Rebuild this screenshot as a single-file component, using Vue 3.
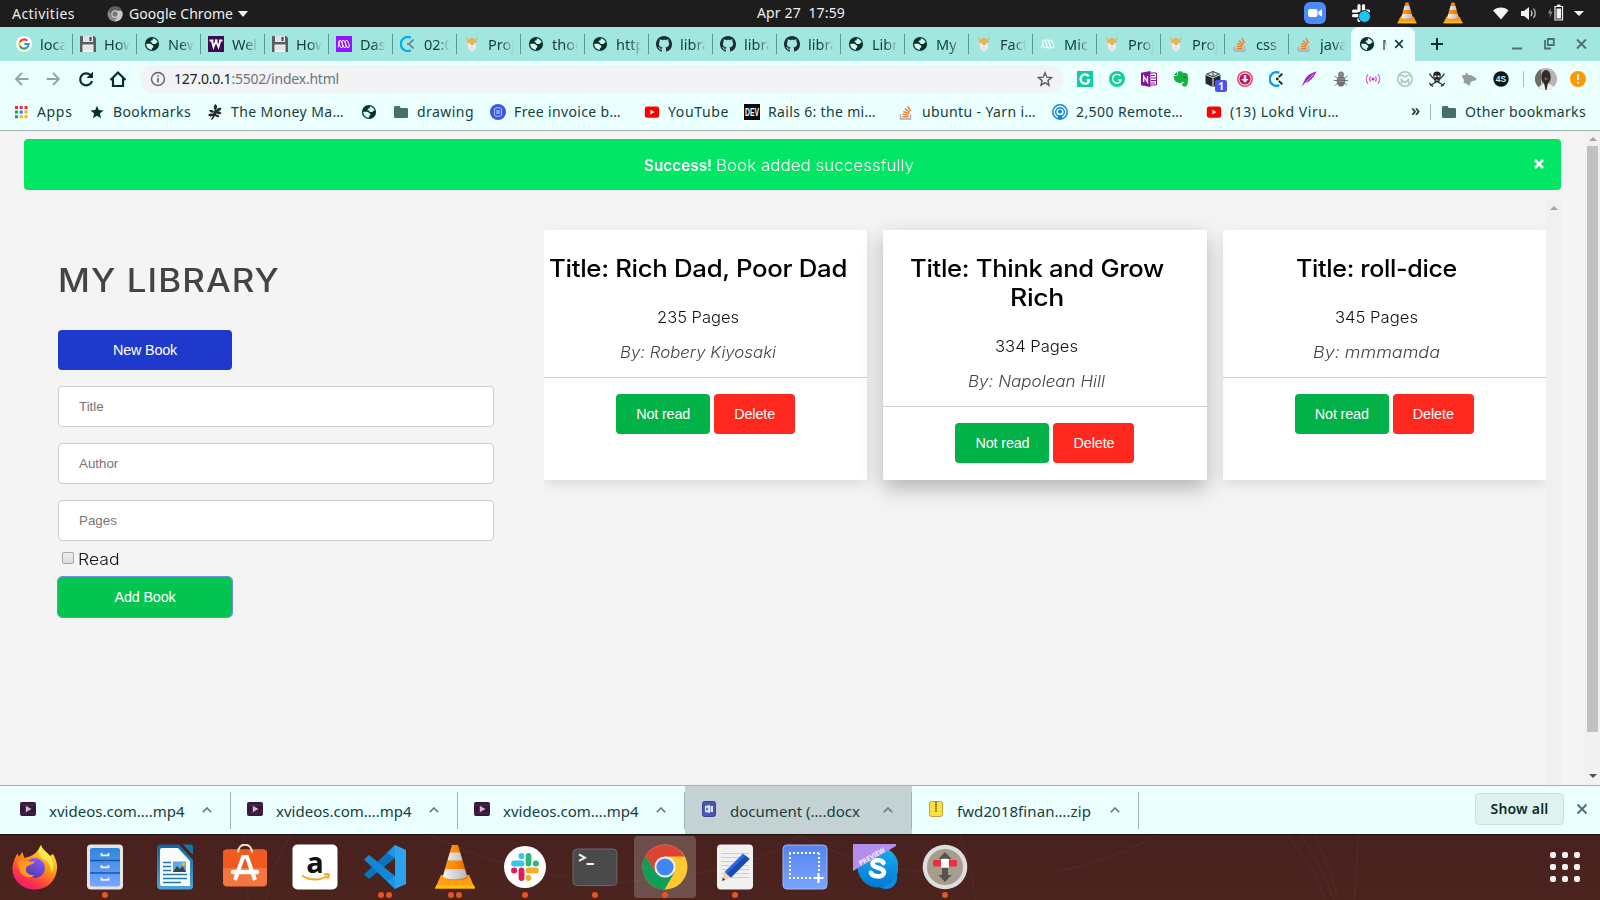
<script setup>
// Spreads the glyphs of a label so that it fills the given width in pixels.
// With the .wide modifier the glyphs themselves are widened instead.
const vFit = {
  mounted(el, { value, modifiers }) {
    if (!value) return
    const natural = el.getBoundingClientRect().width
    if (modifiers.wide) {
      el.style.width = value + 'px'
      el.style.transform = `scaleX(${value / natural})`
    } else {
      el.style.letterSpacing = (value - natural) / el.textContent.length + 'px'
    }
  },
}

const tabs = [
  ['google', 'local'], ['floppy', 'How t'], ['globe', 'New'], ['uw', 'Welc'], ['floppy', 'How t'],
  ['micro', 'Dash'], ['clock', '02:00'], ['viking', 'Proje'], ['globe', 'thog'], ['globe', 'https'],
  ['github', 'librar'], ['github', 'librar'], ['github', 'librar'], ['globe', 'Libra'], ['globe', 'My L'],
  ['viking', 'Facto'], ['microw', 'Micr'], ['viking', 'Proje'], ['viking', 'Proje'], ['stack', 'css -'], ['stack', 'javas'],
]

const extensions = [
  'exC', 'grammarly', 'onenote', 'evernote', 'box', 'down', 'clockify',
  'feather', 'bug', 'cast', 'mask', 'pirate', 'wolf', 'foursq',
]

const bookmarks = [
  ['apps', 'Apps', 35.5], ['star', 'Bookmarks', 78], ['leaf', 'The Money Ma…', 113], ['globe', '', 0],
  ['folder', 'drawing', 57], ['invoice', 'Free invoice b…', 107], ['youtube', 'YouTube', 61],
  ['dev', 'Rails 6: the mi…', 108], ['stack', 'ubuntu - Yarn i…', 114], ['remote', '2,500 Remote…', 107],
  ['youtube', '(13) Lokd Viru…', 109],
]

const books = [
  { title: ['Title: Rich Dad, Poor Dad'], tw: [298], pages: '235 Pages', pw: 82, by: 'By: Robery Kiyosaki', bw: 156 },
  { title: ['Title: Think and Grow', 'Rich'], tw: [254, 54], pages: '334 Pages', pw: 83, by: 'By: Napolean Hill', bw: 137, raised: true },
  { title: ['Title: roll-dice'], tw: [161], pages: '345 Pages', pw: 83, by: 'By: mmmamda', bw: 127 },
]

const downloads = [
  ['video', 'xvideos.com….mp4', 135.5], ['video', 'xvideos.com….mp4', 135.5], ['video', 'xvideos.com….mp4', 135.5],
  ['docx', 'document (….docx', 130], ['zip', 'fwd2018finan….zip', 134],
]

const dock = [
  ['firefox', 0], ['files', 1], ['writer', 0], ['software', 0], ['amazon', 0], ['vscode', 2], ['vlc', 2],
  ['slack', 1], ['terminal', 1], ['chrome', 1], ['gedit', 1], ['shot', 0], ['skype', 0], ['keepass', 1],
]
</script>

<template>
  <div class="screen">
    <svg class="sprite" width="0" height="0">
      <defs>
        <linearGradient id="ffg" x1="0.8" y1="0" x2="0.2" y2="1"><stop offset="0" stop-color="#fff44f" /><stop offset=".4" stop-color="#ff980e" /><stop offset=".75" stop-color="#ff3647" /><stop offset="1" stop-color="#e31587" /></linearGradient>
        <linearGradient id="ffp" x1="0.7" y1="0" x2="0.3" y2="1"><stop offset="0" stop-color="#9059ff" /><stop offset="1" stop-color="#4a3aa8" /></linearGradient>
        <linearGradient id="fil" x1="0" y1="0" x2="0" y2="1"><stop offset="0" stop-color="#2f86dc" /><stop offset="1" stop-color="#7aa6ff" /></linearGradient>
        <linearGradient id="wri" x1="0" y1="0" x2="0" y2="1"><stop offset="0" stop-color="#1266a3" /><stop offset="1" stop-color="#4aa6d8" /></linearGradient>
        <linearGradient id="cone" x1="0" y1="0" x2="1" y2="0"><stop offset="0" stop-color="#ff9a1f" /><stop offset=".5" stop-color="#ff8a00" /><stop offset="1" stop-color="#d96500" /></linearGradient>
        <linearGradient id="cnw" x1="0" y1="0" x2="1" y2="0"><stop offset="0" stop-color="#f4f4f4" /><stop offset="1" stop-color="#b5b5b5" /></linearGradient>
        <linearGradient id="sht" x1="0" y1="0" x2="0" y2="1"><stop offset="0" stop-color="#5483ee" /><stop offset="1" stop-color="#7ba4ff" /></linearGradient>
        <linearGradient id="sky" x1="0" y1="0" x2="0" y2="1"><stop offset="0" stop-color="#19b0f0" /><stop offset="1" stop-color="#0078d7" /></linearGradient>
      </defs>

      <symbol id="i-globe" viewBox="0 0 16 16"><circle cx="8" cy="8" r="7.1" fill="#06302c" /><path d="M8.8 2.2c2.4.3 4.4 2 5 4.3l-1.1-.1-1.3 1.5H8.7L8 6.6 6.4 6l.5-1.3 1.9-.5zM2.2 7.8h4.3l2.2 1.4.9 1.7-1.5 1v1.9C4.600 13.800 2.200 11.200 2.200 7.800z" fill="#d5f8f5" /></symbol>
      <symbol id="i-github" viewBox="0 0 16 16"><path fill="#1f2a33" d="M8 0C3.580 0 0 3.580 0 8c0 3.540 2.290 6.530 5.470 7.590.4.070.55-.17.55-.38 0-.19-.01-.82-.01-1.490-2.010.37-2.530-.49-2.690-.94-.09-.23-.48-.94-.82-1.130-.28-.15-.68-.52-.01-.53.63-.01 1.080.58 1.230.82.72 1.210 1.870.87 2.330.66.07-.52.28-.87.51-1.070-1.780-.2-3.640-.89-3.640-3.950 0-.87.31-1.590.82-2.150-.08-.2-.36-1.020.08-2.120 0 0 .67-.21 2.200.82.64-.18 1.320-.27 2-.27s1.360.09 2 .27c1.530-1.040 2.200-.82 2.200-.82.44 1.100.16 1.920.08 2.120.51.56.82 1.270.82 2.150 0 3.070-1.870 3.750-3.650 3.950.29.25.54.73.54 1.480 0 1.070-.01 1.930-.01 2.200 0 .21.15.46.55.38A8.010 8.010 0 0016 8c0-4.420-3.580-8-8-8z" /></symbol>
      <symbol id="i-google" viewBox="0 0 16 16"><circle cx="8" cy="8" r="8" fill="#fff" /><g fill="none" stroke-width="2.1"><path d="M11.300 4.700A4.600 4.600 0 0 0 3.900 6" stroke="#ea4335" /><path d="M3.900 6a4.600 4.600 0 0 0 0 4" stroke="#fbbc05" /><path d="M3.900 10a4.600 4.600 0 0 0 7.200 1.400" stroke="#34a853" /><path d="M11.100 11.400A4.600 4.600 0 0 0 12.600 8H8.300" stroke="#4285f4" /></g></symbol>
      <symbol id="i-floppy" viewBox="0 0 16 16"><path d="M0 0h14l2 2v14H0z" fill="#575f63" /><path d="M3 0h10v6H3z" fill="#dfe4e7" /><path d="M9.500 1h2v4h-2z" fill="#444" /><path d="M2.500 8.500h11V16h-11z" fill="#f3f3f3" /><path d="M3.500 11h9M3.500 13h9" stroke="#c8c8c8" stroke-width=".8" /></symbol>
      <symbol id="i-uw" viewBox="0 0 16 16"><path d="M0 0h16v16H0z" fill="#3b0a55" /><path d="M1.500 4.500h4M7 4.500h2.500M11 4.500h3.500M3.700 4l1.800 7L8 5l2.500 6 2-7" stroke="#fff" stroke-width="1.900" fill="none" /></symbol>
      <symbol id="i-micro" viewBox="0 0 16 16"><path d="M0 0h16v16H0z" fill="#9013fe" /><g stroke="#fff" stroke-width=".9" fill="none"><ellipse cx="4.800" cy="8" rx="1.700" ry="3.900" transform="rotate(-18 4.800 8)" /><ellipse cx="8" cy="8" rx="1.700" ry="3.900" transform="rotate(-18 8 8)" /><ellipse cx="11.200" cy="8" rx="1.700" ry="3.900" transform="rotate(-18 11.200 8)" /><path d="M3.500 5L2 11.500M12.500 11l1.500-1" /></g></symbol>
      <symbol id="i-microw" viewBox="0 0 16 16"><g stroke="#f2ffff" stroke-width="1" fill="none"><ellipse cx="4.800" cy="8" rx="1.900" ry="4.200" transform="rotate(-18 4.800 8)" /><ellipse cx="8" cy="8" rx="1.900" ry="4.200" transform="rotate(-18 8 8)" /><ellipse cx="11.200" cy="8" rx="1.900" ry="4.200" transform="rotate(-18 11.200 8)" /><path d="M3.300 5L1.500 12M12.500 12l2-1.500" /></g></symbol>
      <symbol id="i-clock" viewBox="0 0 16 16"><path d="M10.800 1.700A7 7 0 1 0 10.800 14.300" stroke="#03a9f4" stroke-width="2.200" fill="none" /><path d="M9 8l4.500-4.500M9 8l4.500 4.500M7 8h2" stroke="#607d8b" stroke-width="1.700" /></symbol>
      <symbol id="i-clockify" viewBox="0 0 16 16"><path d="M10.300 1.800A6.800 6.800 0 1 0 10.300 14.200" stroke="#0c9cf2" stroke-width="2.400" fill="none" /><path d="M9.800 6.200L13.300 2.600M9.800 9.800l3.500 3.600" stroke="#222" stroke-width="1.900" /><circle cx="8.300" cy="8" r="1.400" fill="#222" /></symbol>
      <symbol id="i-viking" viewBox="0 0 16 16"><path d="M4.500 6.500h7l.3 5c-.5 2-2.300 4-3.800 4s-3.300-2-3.800-4z" fill="#f3efea" /><path d="M6 7h4v2.200H6z" fill="#dcb08e" /><path d="M2.500.5c.3 1.800 1 2.500 2.500 2.600C6 2.300 7 2 8 2s2 .3 3 1.100c1.500-.1 2.200-.8 2.500-2.600.8 2 .3 4-1.500 4.800V7H4V5.300C2.200 4.500 1.700 2.500 2.500.5z" fill="#e8b255" /><path d="M6.500 11.500h3M6 13h4" stroke="#cfc8c0" stroke-width=".7" /></symbol>
      <symbol id="i-stack" viewBox="0 0 16 16"><path d="M2.500 10.500V15h10v-4.500" stroke="#a5adb0" stroke-width="1.400" fill="none" /><path d="M4.500 12.700h6M4.600 10.300l6 .8M5.300 7.500l5.600 2.100M7 4.600l4.600 3.900M9.700 2l3 5.200" stroke="#f47a24" stroke-width="1.400" /></symbol>

      <symbol id="i-apps" viewBox="0 0 16 16"><path d="M2 2h3v3H2zM6.700 2h3v3h-3zM11.500 2h3v3h-3z" fill="#ea2b3a" /><path d="M2 6.600h3v3H2zM2 11.300h3v3H2z" fill="#17a05a" /><path d="M6.700 6.600h3v3h-3z" fill="#2a7bf0" /><path d="M11.500 6.600h3v3h-3zM6.700 11.300h3v3h-3zM11.500 11.300h3v3h-3z" fill="#fbb30c" /></symbol>
      <symbol id="i-star" viewBox="0 0 16 16"><path d="M8 1.700l1.800 4.400 4.700.4-3.600 3 1.100 4.700L8 11.700l-4 2.500 1.100-4.700-3.600-3 4.700-.4z" fill="#06302c" /></symbol>
      <symbol id="i-leaf" viewBox="0 0 16 16"><path d="M8.500 0c2 1.300 2 3.600.7 5.200l-.2 1C10 4.500 12 3.300 14.500 4c-.3 2-2 3.300-4.300 3.300 2-.3 3.800.5 4.300 2.200-1.500 1.200-3.700 1-5-.3L9 10.500c2 0 3 .8 3.300 2.500-1.800.6-3.300.1-4-1.200L5 16l-1-.7 2-3.300c-1.700.9-3.800.5-5-1 1-1.500 3-2 4.800-1.200L7 8.500C5 9 2.800 8.300 2 6.300c2-.8 4.200-.2 5.300 1.400L7.600 5.800C6.200 4 6.500 1.500 8.500 0z" fill="#222b2b" /></symbol>
      <symbol id="i-folder" viewBox="0 0 16 16"><path d="M1 3.500C1 2.700 1.500 2 2.300 2h4l1.600 2h5.800c.8 0 1.300.6 1.300 1.300v7.400c0 .7-.5 1.300-1.300 1.300H2.300C1.500 14 1 13.400 1 12.700z" fill="#48706b" /></symbol>
      <symbol id="i-invoice" viewBox="0 0 16 16"><circle cx="8" cy="8" r="8" fill="#3f55e8" /><path d="M4.500 5l1-1.200h5l1 1.200v6l-1 1.200h-5l-1-1.200z" fill="none" stroke="#a9c4ff" stroke-width="1" /><path d="M6.300 6h3.400v4H6.300z" fill="#7fb0ff" /></symbol>
      <symbol id="i-youtube" viewBox="0 0 16 16"><rect x=".8" y="2.500" width="14.400" height="11.300" rx="2.500" fill="#f00" /><path d="M6.400 5.800v4.600L10.400 8.100z" fill="#fff" /></symbol>
      <symbol id="i-dev" viewBox="0 0 16 16"><path d="M0 0h16v16H0z" fill="#0b0b0b" /><text x="8" y="11.500" text-anchor="middle" textLength="14" lengthAdjust="spacingAndGlyphs" font-family="Liberation Sans" font-weight="700" font-size="10" fill="#fff">DEV</text></symbol>
      <symbol id="i-remote" viewBox="0 0 16 16"><circle cx="8" cy="8" r="7.200" fill="none" stroke="#0d86dc" stroke-width="1.500" /><circle cx="8" cy="8" r="4.300" fill="none" stroke="#0d86dc" stroke-width="1.400" /><circle cx="8" cy="7.500" r="2" fill="#0d86dc" /><path d="M5.500 15l.8-4h3.400l.8 4z" fill="#0d86dc" /></symbol>

      <symbol id="i-exC" viewBox="0 0 16 16"><path d="M0 0h16v16H0z" fill="#13cba3" /><path d="M11.800 5.300A4.600 4.600 0 1 0 12.200 10.200" stroke="#fff" stroke-width="2.300" fill="none" /><path d="M9 8.500l4.500-.5-1.500 4z" fill="#fff" /></symbol>
      <symbol id="i-grammarly" viewBox="0 0 16 16"><circle cx="8" cy="8" r="8" fill="#15cf9f" /><path d="M11.400 5A4.400 4.400 0 1 0 12.200 9H9.300" stroke="#fff" stroke-width="1.300" fill="none" /></symbol>
      <symbol id="i-onenote" viewBox="0 0 16 16"><path d="M8 2h7.500v12H8z" fill="#fff" stroke="#8a12a0" /><path d="M10 4.500h4M10 7h5.500M10 9.500h5.500M10 12h4" stroke="#8a12a0" stroke-width="1.200" /><path d="M0 1.800L9.500 0v16L0 14.200z" fill="#8a12a0" /><path d="M2.700 11V5.200L6.500 11V5" stroke="#fff" stroke-width="1.300" fill="none" /></symbol>
      <symbol id="i-evernote" viewBox="0 0 16 16"><path d="M5 .5C6.500 0 9 .2 9.800 1.700c2 .1 4.200.3 4.700 1.300.8 2.400.7 7 0 10-.3 1.800-1.300 2.600-3 2.600-1.600 0-2.400-.8-2.400-2 0-1.300.8-1.800 2.200-1.700-.1-.8-.8-.9-1.600-.8-.4.700-1.300 1.100-2.900.8C3.500 11.500 1 10.500.7 5.200L3 4.700c1 0 1.400-.2 1.500-1.200z" fill="#14b33c" /><path d="M1 4L4 1v2.500L3.300 4z" fill="#0a8f2c" /><path d="M10.500 6.800c.8-1 2-.8 2.300.3" stroke="#06501a" fill="none" /></symbol>
      <symbol id="i-box" viewBox="0 0 16 16"><path d="M8 0l7.500 3L8 6.500.5 3z" fill="#3d4247" /><path d="M3 3l5-2 5 2-5 2.300z" fill="#d9e4e4" /><path d="M8 .5v5" stroke="#3d4247" /><path d="M.5 4l7 3v9L.5 12.500zM15.500 4l-7 3v9l7-3.500z" fill="#25292d" /></symbol>
      <symbol id="i-down" viewBox="0 0 16 16"><circle cx="8" cy="8" r="7.200" fill="#fff" stroke="#e8505c" stroke-width="1.600" /><circle cx="8" cy="8" r="5.600" fill="#c2126e" /><path d="M6.800 4h2.400v4H11.500L8 11.700 4.500 8h2.300z" fill="#fff" /></symbol>
      <symbol id="i-feather" viewBox="0 0 16 16"><path d="M15.500.5C12 1 5 4.500 3.500 9.500L.5 15.500 4 12C8.500 11.500 13 6 15.500.5z" fill="#a127c9" /><path d="M13 3L3 13" stroke="#e79bf7" stroke-width=".8" /></symbol>
      <symbol id="i-bug" viewBox="0 0 16 16"><path d="M1.500 5l3 2M14.500 5l-3 2M.8 9.500h14.400M2 14.500l3-3M14 14.500l-3-3" stroke="#777" stroke-width="1" /><ellipse cx="8" cy="10" rx="4.300" ry="5.500" fill="#6f6f6f" /><circle cx="8" cy="3.500" r="3" fill="#858585" /><path d="M5 8h6M5 10.500h6" stroke="#aaa" stroke-width=".7" /></symbol>
      <symbol id="i-cast" viewBox="0 0 16 16"><circle cx="8" cy="8" r="1.600" fill="#d829b9" /><path d="M5.700 5.400a4 4 0 0 0 0 5.200M10.300 5.400a4 4 0 0 1 0 5.200M3 3.500a7 7 0 0 0 0 9M13 3.500a7 7 0 0 1 0 9" stroke="#d75fcb" stroke-width="1.300" fill="none" /></symbol>
      <symbol id="i-mask" viewBox="0 0 16 16"><circle cx="8" cy="8" r="7.200" fill="none" stroke="#bcc1c1" stroke-width="1.600" /><path d="M1.500 5.500C4 3.500 6.500 4 8 6c1.500-2 4-2.500 6.500-.5M4.500 13V8.500L8 11.500l3.500-3V13" stroke="#bcc1c1" stroke-width="1.600" fill="none" /></symbol>
      <symbol id="i-pirate" viewBox="0 0 16 16"><path d="M.5 2.500C3 7 8 11 15 14.500M15.500 2.500C13 7 8 11 1 14.500" stroke="#333" stroke-width="1.300" fill="none" /><path d="M0 12l4 3.500M16 12l-4 3.500" stroke="#333" stroke-width="1.300" /><path d="M4.200 3.500C4.500 1.500 6 .5 8 .5s3.500 1 3.800 3c.2 1.500-.3 3.300-1.300 4.200V11h-5V7.700C4.500 6.800 4 5 4.200 3.500z" fill="#222" /><path d="M5.400 4.500h2v1.700h-2zM8.600 4.500h2v1.700h-2zM6.500 8.700h3v.9h-3z" fill="#ebffff" /></symbol>
      <symbol id="i-wolf" viewBox="0 0 16 16"><path d="M.5 4.500L4 4l1.500-2.500L7.500 4l3 .3 5 3.200-.5 1.700-4.300 1L9 12.500 8.500 15 5 12.500 2.500 12 3 9z" fill="#979c9c" /></symbol>
      <symbol id="i-foursq" viewBox="0 0 16 16"><circle cx="8" cy="8" r="7.700" fill="#0a1518" /><text x="8" y="11" text-anchor="middle" font-family="Liberation Sans" font-weight="700" font-size="8.500" fill="#bff6ff">4S</text></symbol>

      <symbol id="i-zoom" viewBox="0 0 22 22"><rect width="22" height="22" rx="6" fill="#4a8cff" /><rect x="4" y="7" width="9.500" height="8" rx="2" fill="#fff" /><path d="M14.300 9.700L18 7.200v7.600l-3.700-2.500z" fill="#fff" /></symbol>
      <symbol id="i-slacktray" viewBox="0 0 20 20"><g stroke="#f5f5f5" stroke-width="3.200" stroke-linecap="round"><path d="M8 2.500v5M12.500 2.500V8M2.500 8.200h3M15 8.200h2.500M2.500 12.700H8M8 16v1.500" /></g><circle cx="13.500" cy="13.500" r="6" fill="#15c8f5" stroke="#1d1d1d" /></symbol>
      <symbol id="i-vlc" viewBox="0 0 46 46"><path d="M9 31h28l6 13.500H3z" fill="#ff9d14" /><path d="M3 44.500h40l-.7-3H4.200z" fill="#ffc107" /><path d="M20 1h6l9.800 33c-5 3.400-20.600 3.400-25.600 0z" fill="url(#cone)" /><path d="M17.900 8.500h10.200l2.300 8H15.600zM13.400 25h19.200l2.400 8c-5 3-19 3-24 0z" fill="url(#cnw)" /></symbol>

      <symbol id="i-video" viewBox="0 0 16 14"><rect width="16" height="14" rx="2" fill="#36183b" /><path d="M0 3h16M0 11h16" stroke="#57345c" stroke-width=".7" /><path d="M5.800 3.800v6.400L11.500 7z" fill="#cfb9d2" /></symbol>
      <symbol id="i-docx" viewBox="0 0 14 16"><rect x=".5" y=".5" width="13" height="15" rx="2" fill="#4758b5" stroke="#35449a" /><path d="M3 5l5-1v8l-5-1zM8.500 5H11v6H8.500z" fill="#dfe4fa" /><path d="M5 6.800v2.600" stroke="#4758b5" stroke-width="1.500" /></symbol>
      <symbol id="i-zip" viewBox="0 0 14 16"><rect x=".5" y=".5" width="13" height="15" rx="2" fill="#fbdf3c" stroke="#b9a040" /><path d="M7 1v7" stroke="#75621a" stroke-width="2" stroke-dasharray="1.300 .8" /><path d="M6.200 8.500h1.600v2.500H6.200z" fill="#8d7722" /></symbol>

      <symbol id="i-firefox" viewBox="0 0 46 46"><path d="M29 1c1 4 5 6 9 11l3-2c3 6 4.500 9 4 15-1 12-10 20.500-22 20.500S.5 37 .5 25C.5 19 3 13.500 5.500 9.500L7 13l3-5 2.500 6C17 12.500 20 12 23 9.500c3-2.500 4-5.500 6-8.500z" fill="url(#ffg)" /><path d="M29 1c1 5 5 6 9 11 4 6 4.500 13 1 18 1-8-3-13-8-15-5-2-5-9-2-14z" fill="#ffe94a" /><circle cx="23" cy="24" r="10" fill="url(#ffp)" /><path d="M6 18c6-4 11 1 17-1-1 4-7 3-9 7-1 5 4 8 9 7-6 5-17 2-17-13z" fill="#ff9a1d" /></symbol>
      <symbol id="i-files" viewBox="0 0 46 46"><rect x="5" y=".5" width="36" height="45" rx="4" fill="#e8e4de" /><rect x="8" y="4" width="30" height="38.500" rx="2" fill="url(#fil)" /><path d="M8 16.500h30M8 29h30" stroke="#1758a8" stroke-width="1.300" /><path d="M19.500 9v2.300h7V9M19.500 21v2.300h7V21M19.500 33.500v2.300h7v-2.300" stroke="#eef1f5" stroke-width="1.800" fill="none" /></symbol>
      <symbol id="i-writer" viewBox="0 0 46 46"><path d="M9 .5h18L41 16v26a3.500 3.500 0 0 1-3.500 3.500H9A4 4 0 0 1 5 41.500v-37a4 4 0 0 1 4-4z" fill="url(#wri)" /><path d="M10 4h16l12 13v25H10a2 2 0 0 1-2-2V6a2 2 0 0 1 2-2z" fill="#fafafa" /><path d="M31 .5h8a2 2 0 0 1 2 2V11z" fill="#1673b0" /><path d="M11 18.500h8M11 22.500h8M11 26.500h8M11 30.500h24M11 34.500h24M11 38.500h18" stroke="#1b78b3" stroke-width="1.700" /><path d="M21 17.500h13v10.500H21z" fill="#5aabe3" /><path d="M21 28l4-6 3 3 2.500-3 3.500 6z" fill="#3a4148" /><circle cx="31.500" cy="20" r="1.600" fill="#f5c12f" /></symbol>
      <symbol id="i-software" viewBox="0 0 46 46"><rect x="1" y="5.500" width="44" height="37" rx="4" fill="#f4753f" /><path d="M5 5.500h36a4 4 0 0 1 4 4V24H1V9.500a4 4 0 0 1 4-4z" fill="#ef5a20" /><path d="M16 8.500c0-10.500 14-10.500 14 0" stroke="#f3dfc0" stroke-width="2" fill="none" /><path d="M13 36l8-23h4l8 23" stroke="#fff" stroke-width="4" fill="none" /><path d="M11 28h24" stroke="#fff" stroke-width="4.500" stroke-linecap="round" /></symbol>
      <symbol id="i-amazon" viewBox="0 0 46 46"><rect x=".5" y=".5" width="45" height="45" rx="5" fill="#fff" /><text x="23" y="29" text-anchor="middle" font-family="Open Sans" font-weight="700" font-size="29" fill="#111">a</text><path d="M10 31.500c8 5.500 18 5 25.500.5M32 30.500c3-.8 5-.6 5 .3 0 1-.6 2.700-1.600 3.800" stroke="#f5a623" stroke-width="1.900" fill="none" /></symbol>
      <symbol id="i-vscode" viewBox="0 0 46 46"><path d="M33 1l11 5v34l-11 5z" fill="#2ba4f0" /><path d="M33 1v13L7 35l-5-4.500z" fill="#0b74c0" /><path d="M33 45V32L7 11l-5 4.500z" fill="#1388d6" /><path d="M33 1L25 9l8 5zM33 45l-8-8 8-5z" fill="#1e96e8" /></symbol>
      <symbol id="i-slack" viewBox="0 0 46 46"><circle cx="23" cy="23" r="21" fill="#fff" /><g stroke-width="5.800" stroke-linecap="round"><path d="M19.500 12v.3M12 19.500h7.500" stroke="#36c5f0" /><path d="M26.500 12v7.500M34 19.500h-.3" stroke="#2eb67d" /><path d="M34 26.500h-7.500M26.500 34v-.3" stroke="#ecb22e" /><path d="M19.500 34v-7.500M12 26.500h.3" stroke="#e01e5a" /></g></symbol>
      <symbol id="i-terminal" viewBox="0 0 46 46"><rect x="1" y="5" width="44" height="36.500" rx="4" fill="#4a4a4a" stroke="#686868" /><path d="M7 10.500l6 3.200-6 3.200M14.500 20h7.500" stroke="#f2f2f2" stroke-width="2" fill="none" /></symbol>
      <symbol id="i-chrome" viewBox="0 0 46 46"><circle cx="23" cy="23" r="22.500" fill="#fcc934" /><path d="M3.500 11.800A22.500 22.500 0 0 1 42.500 12.500H23L13.400 28.500z" fill="#db4437" /><path d="M3.500 11.800A22.500 22.500 0 0 0 22.500 45.500L32.500 28.500 13.500 28.500z" fill="#0f9d58" /><circle cx="23" cy="23" r="10.500" fill="#f1f1f1" /><circle cx="23" cy="23" r="8.600" fill="#4285f4" /></symbol>
      <symbol id="i-gedit" viewBox="0 0 46 46"><rect x="5" y=".5" width="36" height="45" rx="4" fill="#f1f1f1" /><path d="M9 9.500h28M9 13.500h28M9 17.500h28M9 21.500h28M9 25.500h28M9 29.500h28M9 33.500h28" stroke="#cfcfcf" /><path d="M10 37l2.500-9 6.500 5.500z" fill="#f5d2ae" /><path d="M10 37l.9-3.200 2.300 2z" fill="#333" /><path d="M12.500 28L31 9.500l6.500 5.500L19 33.500z" fill="#2f67dd" /><path d="M14.800 30L33.500 11.500l4 3.500L19 33.500z" fill="#1d4bb5" /></symbol>
      <symbol id="i-shot" viewBox="0 0 46 46"><rect x="1" y="1" width="44" height="44" rx="4" fill="url(#sht)" stroke="#9cb9fb" /><path d="M7 9h31M7 34h24M8 9v26M37 9v19" stroke="#fff" stroke-width="2" stroke-dasharray="2 2" fill="none" /><path d="M36.500 29v10M31.500 34h10" stroke="#fff" stroke-width="2.200" /></symbol>
      <symbol id="i-skype" viewBox="0 0 46 46"><circle cx="34" cy="34" r="11" fill="#0a91dd" /><circle cx="26" cy="23" r="20.500" fill="url(#sky)" /><path d="M31.500 19c-1.500-3.500-11-4-11 .8 0 5 11.500 3 11.500 8.600 0 5.500-11.500 5-13 .4" stroke="#fff" stroke-width="4.600" fill="none" stroke-linecap="round" /><path d="M1 0h43v2L1 27z" fill="#b38df0" /><text transform="translate(8.500 22) rotate(-30)" textLength="29" lengthAdjust="spacingAndGlyphs" font-family="Open Sans" font-weight="700" font-size="7" fill="#f5efff">PREVIEW</text></symbol>
      <symbol id="i-keepass" viewBox="0 0 46 46"><circle cx="23" cy="23" r="22.300" fill="#dedede" /><circle cx="23" cy="23" r="18" fill="#a69d8c" /><path d="M23 8l6.500 7H26v16h3.500L23 38l-6.500-7H20V15h-3.500z" fill="#57534c" /><rect x="11" y="16" width="24" height="6.500" rx="1.500" fill="#ef2b3f" /><rect x="19" y="14.800" width="8" height="9" rx="1.500" fill="#fff" /></symbol>
    </svg>

    <!-- desktop top bar -->
    <div class="topbar">
      <span class="act" v-fit="63">Activities</span>
      <svg class="tbchrome" viewBox="0 0 16 16"><circle cx="8" cy="8" r="7.500" fill="#8b8b8b" /><path d="M8 4.500h7A7.500 7.500 0 0 0 1.500 4.300L4.700 9.800z" fill="#5e5e5e" /><path d="M15 5H8l3 5-3.500 5.500A7.500 7.500 0 0 0 15 5z" fill="#c9c9c9" /><circle cx="8" cy="8" r="3.300" fill="#777" stroke="#ddd" /></svg>
      <span class="appname" v-fit="104">Google Chrome</span>
      <i class="tri"></i>
      <span class="date" v-fit="88">Apr 27&nbsp; 17:59</span>
      <div class="tray">
        <svg class="t22"><use href="#i-zoom" /></svg>
        <svg class="t20"><use href="#i-slacktray" /></svg>
        <svg class="t22"><use href="#i-vlc" /></svg>
        <svg class="t22"><use href="#i-vlc" /></svg>
      </div>
      <svg class="status" viewBox="0 0 100 20">
        <path d="M0 7.500C4 3.500 12 3.500 15.500 7.500L8 16.500z" fill="#f2f2f2" />
        <path d="M28 8h3l5-4v13l-5-4h-3z" fill="#f2f2f2" /><path d="M38 7.500q2 2.800 0 5.600M40.500 5.500q3.500 4.800 0 9.500" stroke="#c8c8c8" stroke-width="1.200" fill="none" />
        <path d="M57.500 5l-2.500 5.500h2L56.500 15l3-6.500h-2z" fill="#888" /><path d="M62 3.500h7.500v13.500H62z" fill="#1d1d1d" stroke="#f2f2f2" stroke-width="1.200" /><path d="M63.500 5.500h4.500v10h-4.500z" fill="#f2f2f2" /><path d="M64 2.300h3.500" stroke="#f2f2f2" stroke-width="1.500" />
        <path d="M81 8h10l-5 5z" fill="#f2f2f2" />
      </svg>
    </div>

    <!-- browser tabs -->
    <div class="tabs">
      <div v-for="(t, i) in tabs" :key="i" class="tab" :class="{ last: i === tabs.length - 1 }">
        <svg class="ic"><use :href="'#i-' + t[0]" /></svg>
        <span class="tt">{{ t[1] }}</span>
      </div>
      <div class="tab active">
        <svg class="ic"><use href="#i-globe" /></svg>
        <span class="tt">M</span>
        <svg class="close" viewBox="0 0 10 10"><path d="M1.200 1.200l7.600 7.600M8.800 1.200L1.200 8.800" stroke="#17403c" stroke-width="1.700" /></svg>
      </div>
      <svg class="plus" viewBox="0 0 12 12"><path d="M6 0v12M0 6h12" stroke="#06302c" stroke-width="2" /></svg>
      <svg class="wc" viewBox="0 0 80 16">
        <path d="M1 12.500h10" stroke="#4e6f6d" stroke-width="2" />
        <path d="M34 4v8.500H40M36.800 3h6v6h-6z" stroke="#4e6f6d" stroke-width="1.800" fill="none" />
        <path d="M66 3.500l9 9M75 3.500l-9 9" stroke="#4e6f6d" stroke-width="1.900" />
      </svg>
    </div>

    <!-- address bar -->
    <div class="toolbar">
      <svg class="nav" viewBox="0 0 120 18">
        <path d="M15.500 9H3M9 3L3 9l6 6" stroke="#8aa8a5" stroke-width="1.800" fill="none" />
        <path d="M33.500 9H46M40 3l6 6-6 6" stroke="#8aa8a5" stroke-width="1.800" fill="none" />
        <path d="M77.500 5.200A6 6 0 1 0 79 11" stroke="#06302c" stroke-width="2.200" fill="none" /><path d="M80 1.500v6.500h-6.500z" fill="#06302c" />
        <path d="M97.500 10L105 2.500 112.500 10M100 8.500V16h10V8.500" stroke="#06302c" stroke-width="2.200" fill="none" />
      </svg>
      <div class="omni">
        <svg class="info" viewBox="0 0 16 16"><circle cx="8" cy="8" r="6.500" fill="none" stroke="#5f6368" stroke-width="1.400" /><path d="M8 7v4.500M8 4.200v1.600" stroke="#5f6368" stroke-width="1.600" /></svg>
        <span class="url" v-fit="165"><b>127.0.0.1</b>:5502/index.html</span>
        <svg class="fav" viewBox="0 0 16 16"><path d="M8 1.800l1.800 4.400 4.700.4-3.600 3 1.100 4.600L8 11.700l-4 2.500 1.100-4.600-3.600-3 4.700-.4z" fill="none" stroke="#555b60" stroke-width="1.400" /></svg>
      </div>
      <div class="exts">
        <div v-for="e in extensions" :key="e" class="ext">
          <svg class="ic"><use :href="'#i-' + e" /></svg>
          <span v-if="e === 'box'" class="badge">1</span>
        </div>
      </div>
      <svg class="avatar" viewBox="0 0 22 22"><clipPath id="avc"><circle cx="11" cy="11" r="11" /></clipPath><g clip-path="url(#avc)"><path d="M0 0h22v22H0z" fill="#b4b6b6" /><path d="M0 0h6v22H0z" fill="#6c6e6e" /><path d="M3 22c1-5 4-6 8-6s8 1 10 6z" fill="#f0f0f0" /><ellipse cx="11" cy="9" rx="4.700" ry="7" fill="#332a28" /><path d="M9 15h4l-1.500 7h-1z" fill="#332a28" /><path d="M9.500 9.500h3v2.500h-3z" fill="#6b5d59" /></g></svg>
      <svg class="warn" viewBox="0 0 16 16"><circle cx="8" cy="8" r="8" fill="#ff9800" /><path d="M8 3.500v5.500M8 10.700v2" stroke="#fff" stroke-width="2" /></svg>
    </div>

    <!-- bookmarks -->
    <div class="bm">
      <div v-for="(b, i) in bookmarks" :key="i" class="bmi">
        <svg class="ic"><use :href="'#i-' + b[0]" /></svg><span v-fit="b[2]">{{ b[1] }}</span>
      </div>
      <span class="more">»</span>
      <div class="bmi other"><svg class="ic"><use href="#i-folder" /></svg><span v-fit="121">Other bookmarks</span></div>
    </div>

    <!-- page -->
    <div class="page">
      <div class="alert">
        <p><strong v-fit.wide="68">Success!</strong> <span v-fit.wide="198">Book added successfully</span></p>
        <svg viewBox="0 0 10 10"><path d="M1 1l8 8M9 1L1 9" stroke="#fff" stroke-width="2.600" /></svg>
      </div>
      <div class="cols">
        <div class="form">
          <h1><span v-fit.wide="222">MY LIBRARY</span></h1>
          <button class="btn blue wide"><span v-fit="64">New Book</span></button>
          <input placeholder="Title" />
          <input placeholder="Author" />
          <input placeholder="Pages" />
          <div class="chk"><i></i><span v-fit.wide="41.5">Read</span></div>
          <button class="btn green wide"><span v-fit="61">Add Book</span></button>
        </div>
        <div class="shelf">
          <div class="cards">
            <article v-for="b in books" :key="b.pages" class="card" :class="{ raised: b.raised }">
              <h2><span v-for="(l, i) in b.title" :key="l" v-fit.wide="b.tw[i]">{{ l }}</span></h2>
              <p class="pages"><span v-fit.wide="b.pw">{{ b.pages }}</span></p>
              <p class="by"><span v-fit.wide="b.bw">{{ b.by }}</span></p>
              <div class="acts">
                <button class="btn nr"><span v-fit="54">Not read</span></button>
                <button class="btn del"><span v-fit="41">Delete</span></button>
              </div>
            </article>
          </div>
          <div class="sbar"><i class="up"></i></div>
        </div>
      </div>
      <div class="mainbar"><i class="up"></i><div class="thumb"></div><i class="dn"></i></div>
    </div>

    <!-- downloads -->
    <div class="dls">
      <div v-for="(d, i) in downloads" :key="i" class="dl" :class="{ hot: i === 3 }">
        <svg class="di"><use :href="'#i-' + d[0]" /></svg>
        <span v-fit="d[2]">{{ d[1] }}</span>
        <svg class="caret" viewBox="0 0 10 6"><path d="M.8 5.200L5 1l4.200 4.200" stroke="#50807b" stroke-width="1.600" fill="none" /></svg>
      </div>
      <button class="showall"><span v-fit="58">Show all</span></button>
      <svg class="dx" viewBox="0 0 12 12"><path d="M1.500 1.500l9 9M10.500 1.500l-9 9" stroke="#48706b" stroke-width="1.800" /></svg>
    </div>

    <!-- dock -->
    <div class="dock">
      <svg class="rays" viewBox="0 0 1600 65" preserveAspectRatio="none"><g stroke="#fff" stroke-opacity=".03" stroke-width="1.500" fill="none"><path d="M290 0q-18 30-24 65M244 0q2 30 4 65M430 0q80 38 180 48 150-10 190-48 60 36 175 42M960 0q10 30 16 65M1060 36q60-14 96-36M1287 0q30 36 38 65M1301 0q24 36 33 65M1314 0q18 36 24 65M1358 0q-1 36-4 65" /></g></svg>
      <div v-for="d in dock" :key="d[0]" class="app" :class="{ on: d[0] === 'chrome' }">
        <svg class="big"><use :href="'#i-' + d[0]" /></svg>
        <div class="dots"><i v-for="n in d[1]" :key="n"></i></div>
      </div>
      <div class="grid9"><i v-for="n in 9" :key="n"></i></div>
    </div>
  </div>
</template>

<style>
html, body { margin: 0; overflow: hidden; }
</style>

<style scoped>
.screen { width: 1600px; height: 900px; display: flex; flex-direction: column; overflow: hidden; font: 14px/20px "Noto Sans", "Open Sans", sans-serif; color: #17403c; background: #f4f4f4; }
.screen * { box-sizing: border-box; }
.screen span, .screen strong { white-space: nowrap; display: inline-block; transform-origin: 0 50%; }
.sprite { position: absolute; }
svg { display: block; flex: none; }
.ic { width: 16px; height: 16px; }

.topbar { height: 27px; flex: none; background: #1d1d1d; color: #eee; display: flex; align-items: center; padding-left: 12px; }
.tbchrome { width: 16px; height: 16px; margin-left: 32px; }
.appname { margin-left: 6px; }
.tri { border: 5px solid transparent; border-top: 6px solid #f2f2f2; border-bottom: 0; margin-left: 5px; }
.date { margin-left: 509px; margin-top: -1px; }
.tray { display: flex; align-items: center; margin-left: 459px; gap: 24px; margin-top: -1px; }
.t22 { width: 22px; height: 22px; }
.t20 { width: 20px; height: 20px; margin: 0 1px; }
.status { width: 100px; height: 20px; margin: -1px 0 0 29px; }

.tabs { height: 34px; flex: none; background: #a2e6e0; display: flex; padding-left: 9px; }
.tab { width: 64px; display: flex; align-items: center; padding-left: 7px; position: relative; flex: none; font-size: 14.500px; }
.tab::after { content: ""; width: 1px; height: 20px; background: #5b9792; position: absolute; right: 0; top: 7px; }
.tab.last::after, .tab.active::after { display: none; }
.tt { margin-left: 8px; width: 26px; overflow: hidden; -webkit-mask-image: linear-gradient(90deg, #000 50%, transparent 100%); mask-image: linear-gradient(90deg, #000 50%, transparent 100%); }
.tab.active { background: #ebffff; border-radius: 8px 8px 0 0; padding-left: 8px; margin-left: -2px; }
.active .tt { width: 5px; margin-left: 7px; }
.close { width: 10px; height: 10px; margin-left: 7px; }
.plus { width: 12px; height: 12px; margin: 11px 0 0 16px; }
.wc { width: 80px; height: 16px; margin: 9px 0 0 68px; }

.toolbar { height: 36px; flex: none; background: #ebffff; display: flex; align-items: center; padding-left: 13px; }
.nav { width: 120px; height: 18px; }
.omni { width: 923px; height: 28px; margin-left: 7px; border-radius: 14px; background: #f1f3f4; display: flex; align-items: center; padding: 0 10px; }
.info { width: 16px; height: 16px; }
.url { margin-left: 8px; color: #70757a; }
.url b { font-weight: 400; color: #202124; }
.fav { width: 16px; height: 16px; margin-left: auto; }
.exts { display: flex; margin-left: 6px; }
.exts::after { content: ""; width: 1px; height: 16px; background: #a9bfbd; margin: 0 -7px 0 6px; }
.ext { width: 32px; display: flex; justify-content: center; position: relative; }
.badge { position: absolute; left: 18px; top: 9px; width: 12px; height: 12px; border-radius: 2px; background: #4a55f0; color: #fff; font: 700 10px/12px "Noto Sans", sans-serif; text-align: center; }
.avatar { width: 22px; height: 22px; margin-left: 18px; }
.warn { width: 16px; height: 16px; margin-left: 13px; }

.bm { height: 34px; flex: none; background: #ebffff; border-bottom: 1px solid #9fb5b3; display: grid; align-items: center; padding: 0 0 4px 13px; grid-template-columns: 76px 118px 154px 32px 97px 154px 100px 154px 154px 154px 205px 19px 1fr; }
.bmi { display: flex; align-items: center; gap: 8px; }
.more { font-size: 16px; font-weight: 600; line-height: 18px; padding-bottom: 3px; }
.other { border-left: 1px solid #9fb5b3; padding-left: 10px; height: 16px; }

.page { height: 654px; flex: none; background: #f4f4f4; position: relative; font-family: Inter, "Open Sans", sans-serif; color: #111; padding: 8px 39px 0 24px; }
.alert { height: 51px; background: #02e666; border-radius: 4px; color: #fff; display: flex; align-items: center; padding: 0 17px 0 0; font-size: 16px; }
.alert p { margin: 0; flex: 1; text-align: center; font-weight: 300; }
.alert strong { font-weight: 600; text-align: left; }
.alert span { text-align: left; }
.alert svg { width: 10px; height: 10px; margin-top: -2px; }
.cols { display: flex; margin-top: 10px; height: 585px; }
.form { width: 436px; margin: 71px 50px 0 34px; flex: none; }
h1 { margin: 0 0 39px; font-size: 32px; line-height: 20px; height: 20px; font-weight: 500; color: #444; letter-spacing: 1px; }
.btn { border: 0; border-radius: 4px; height: 40px; color: #fff; font: 14.400px/40px "Liberation Sans", Arial, sans-serif; text-align: center; display: block; padding: 0; }
.wide { width: 174px; }
.blue { background: #1f39cd; margin-bottom: 16px; }
.green { background: #04c450; outline: 1px solid #6d8fe6; }
input { display: block; width: 436px; height: 41px; border: 1px solid #ccc; border-radius: 4px; padding: 0 20px; margin-bottom: 16px; background: #fff; font: 13.330px "Liberation Sans", Arial, sans-serif; }
input::placeholder { color: #757575; opacity: 1; }
.chk { display: flex; align-items: center; height: 20px; margin: -8px 0 8px; padding-left: 4px; font-size: 16px; font-weight: 300; }
.chk i { width: 12px; height: 12px; border: 1px solid #a5a5a5; border-radius: 2px; background: linear-gradient(#eee, #dcdcdc); margin: -2px 4px 0 0; }

.shelf { flex: 1; display: flex; overflow: hidden; }
.cards { width: 1002px; flex: none; display: flex; gap: 16px; align-items: flex-start; padding-top: 30px; overflow: hidden; }
.card { flex: 1; height: 250px; background: #fff; box-shadow: 0 4px 12px rgba(0, 0, 0, .1); text-align: center; }
.raised { box-shadow: 0 8px 20px rgba(0, 0, 0, .27); z-index: 1; }
h2 { margin: 24px 16px 0 0; font-size: 24px; line-height: 29px; font-weight: 500; color: #000; display: flex; flex-direction: column; align-items: center; letter-spacing: -.3px; }
h2 span, .card p span { text-align: left; }
.card p { margin: 0; height: 20px; line-height: 20px; margin-right: 16px; font-size: 16px; display: flex; justify-content: center; }
.card .pages { margin-top: 24px; font-weight: 300; }
.card .by { margin-top: 15px; font-style: italic; color: #444; font-weight: 300; }
.acts { border-top: 1px solid #ccc; margin-top: 15px; padding-top: 16px; display: flex; justify-content: center; gap: 4px; }
.nr { width: 94px; background: #02b148; }
.del { width: 81px; background: #ff281f; }
.sbar { width: 15px; background: #f0f0f0; padding: 6px 0 0 4px; }
.up, .dn { display: block; border: 4px solid transparent; width: 8px; height: 4px; }
.up { border-top: 0; border-bottom-color: #a3a3a3; }
.dn { border-bottom: 0; border-top-color: #505050; }
.mainbar { position: absolute; right: 0; top: 0; width: 15px; height: 654px; background: #f1f1f1; display: flex; flex-direction: column; align-items: center; padding: 6px 0 7px; }
.thumb { width: 11px; height: 586px; background: #c1c1c1; margin: 5px 0 auto; }

.dls { height: 49px; flex: none; background: #ebffff; border-top: 1px solid #9fb5b3; display: flex; font-size: 15px; }
.dl { width: 227px; display: flex; align-items: center; padding-left: 16px; position: relative; }
.dl:first-child { width: 231px; padding-left: 20px; }
.dl span { margin-top: 2px; }
.dl::after { content: ""; position: absolute; right: 0; top: 6px; height: 37px; width: 1px; background: #9fb5b3; }
.di { width: 16px; height: 16px; margin: -3px 13px 0 0; }
.caret { width: 10px; height: 6px; position: absolute; right: 19px; top: 21px; }
.hot { background: #c5d2d3; }
.showall { margin: 7px 0 0 auto; width: 89px; height: 32px; border: 1px solid #cfdedd; border-radius: 4px; background: #e0f2f0; font: 600 14px/28px "Noto Sans", sans-serif; color: #06302c; padding: 0; text-align: center; }
.dx { width: 12px; height: 12px; margin: 17px 12px 0 12px; }

.dock { flex: 1; background: linear-gradient(#48211f, #4c241e); border-top: 1px solid #1c1010; display: flex; position: relative; }
.rays { position: absolute; left: 0; top: 0; width: 1600px; height: 65px; }
.app { width: 62px; height: 62px; margin: 1px 4px 0; display: flex; flex-direction: column; align-items: center; border-radius: 4px; padding-top: 8px; position: relative; }
.on { background: rgba(255, 255, 255, .2); }
.big { width: 46px; height: 46px; }
.dots { display: flex; gap: 2px; margin-top: 2px; }
.dots i { width: 6px; height: 6px; border-radius: 3px; background: #e95420; }
.grid9 { display: grid; grid-template-columns: repeat(3, 6px); gap: 6px; margin: 17px 20px 0 auto; align-content: start; }
.grid9 i { width: 6px; height: 6px; border-radius: 2px; background: #f1f1f1; }
</style>
